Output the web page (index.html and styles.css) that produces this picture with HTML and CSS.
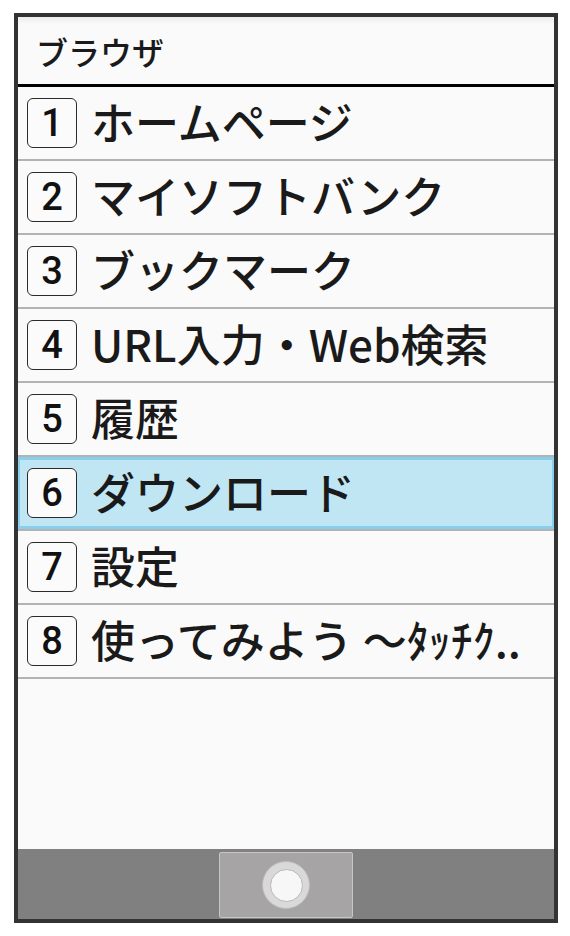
FILE: index.html
```html
<!DOCTYPE html>
<html lang="ja">
<head>
    <meta charset="UTF-8">
    <meta name="viewport" content="width=device-width, initial-scale=1.0">
    <title>ブラウザ</title>
    <link rel="stylesheet" href="styles.css">
</head>
<body>
    <div class="phone">
        <div class="title-bar">ブラウザ</div>

        <ul class="menu">
            <li class="menu-item"><span class="num">1</span><span class="label">ホームページ</span></li>
            <li class="menu-item"><span class="num">2</span><span class="label">マイソフトバンク</span></li>
            <li class="menu-item"><span class="num">3</span><span class="label">ブックマーク</span></li>
            <li class="menu-item"><span class="num">4</span><span class="label">URL入力・Web検索</span></li>
            <li class="menu-item"><span class="num">5</span><span class="label">履歴</span></li>
            <li class="menu-item selected"><span class="num">6</span><span class="label">ダウンロード</span></li>
            <li class="menu-item"><span class="num">7</span><span class="label">設定</span></li>
            <li class="menu-item"><span class="num">8</span><span class="label">使ってみよう ～ﾀｯﾁｸ..</span></li>
        </ul>

        <div class="nav-bar">
            <div class="home-key">
                <div class="home-ring">
                    <div class="home-dot"></div>
                </div>
            </div>
        </div>
    </div>
</body>
</html>
```

FILE: styles.css
```css
* {
    margin: 0;
    padding: 0;
    box-sizing: border-box;
}

body {
    background: #fff;
    font-family: 'Noto Sans CJK JP', 'Noto Sans', sans-serif;
    color: #1a1a1a;
}

.phone {
    margin: 13px 0 0 14px;
    width: 544px;
    height: 910px;
    border: 4px solid #333;
    background: #fafafa;
    display: flex;
    flex-direction: column;
}

.title-bar {
    height: 70px;
    border-bottom: 3px solid #000;
    background: linear-gradient(#ececec, #fafafa 7px);
    padding-left: 18px;
    display: flex;
    align-items: center;
    font-size: 32px;
    font-weight: 500;
    line-height: 1;
    padding-top: 1px;
}

.menu {
    list-style: none;
    flex: 1;
}

.menu-item {
    height: 74px;
    border-bottom: 2px solid #b3b3b3;
    display: flex;
    align-items: center;
    padding-left: 9px;
}

.menu-item.selected {
    background: #c0e6f4;
    box-shadow: inset 0 0 0 2px #88cfec, inset 0 3px #88cfec, inset 0 -3px #88cfec;
}

.num {
    width: 50px;
    height: 50px;
    border: 1px solid #2a2a2a;
    border-radius: 6px;
    background: #fbfbfb;
    display: flex;
    align-items: center;
    justify-content: center;
    font-family: Roboto, sans-serif;
    font-size: 38px;
    font-weight: 500;
    line-height: 1;
    color: #111;
    flex-shrink: 0;
}

.label {
    margin-left: 14px;
    margin-bottom: 4px;
    font-size: 44px;
    font-weight: 500;
    line-height: 1;
    white-space: nowrap;
    color: #1a1a1a;
}

.nav-bar {
    height: 70px;
    background: #808080;
    display: flex;
    justify-content: center;
    padding-top: 3px;
}

.home-key {
    width: 134px;
    height: 66px;
    background: #a6a4a4;
    border: 1px solid #c6c6c6;
    border-radius: 2px;
    display: flex;
    align-items: center;
    justify-content: center;
}

.home-ring {
    width: 48px;
    height: 48px;
    border-radius: 50%;
    background: #d9d9d9;
    border: 1px solid #bcbcbc;
    display: flex;
    align-items: center;
    justify-content: center;
}

.home-dot {
    width: 33px;
    height: 33px;
    border-radius: 50%;
    background: #f7f7f7;
    border: 1px solid #b8b8b8;
}
```
